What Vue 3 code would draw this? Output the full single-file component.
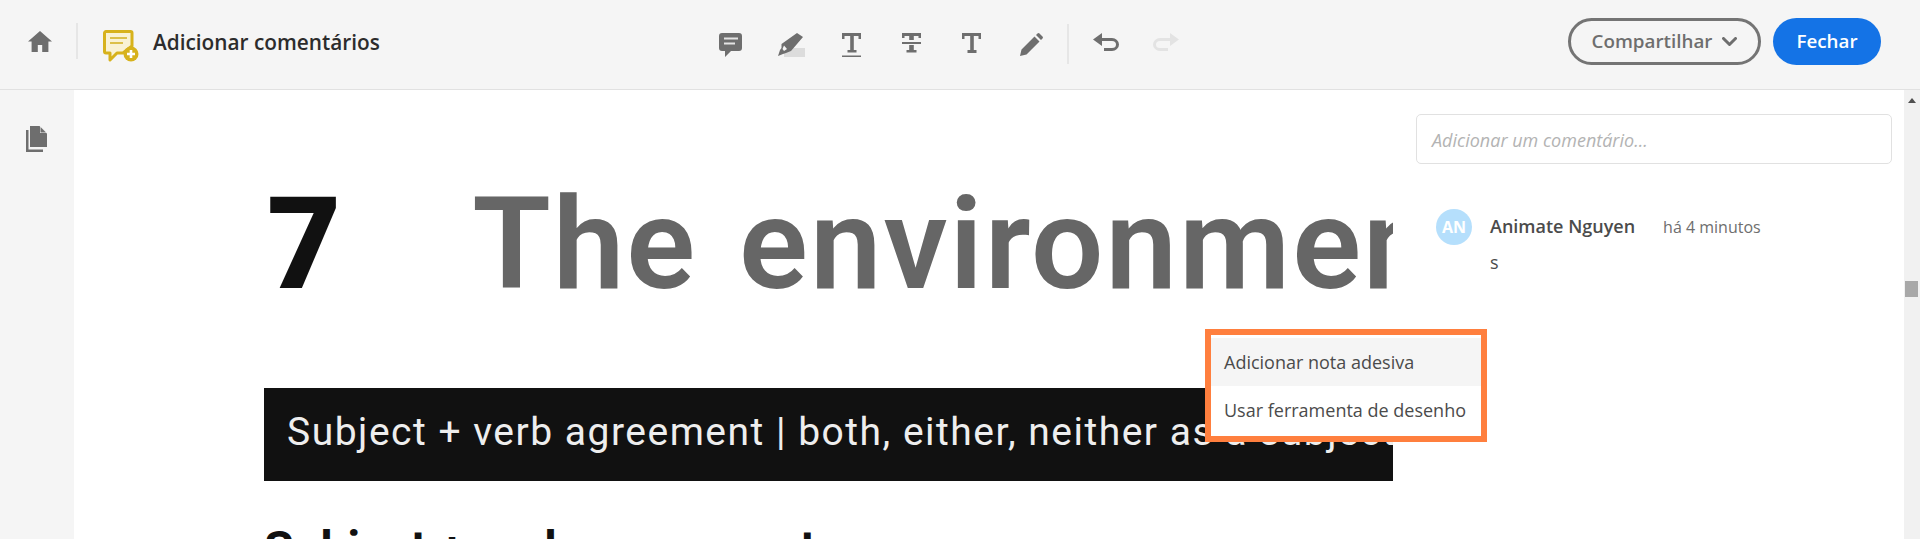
<template>
  <div class="viewer">
    <header class="topbar">
      <div class="topbar__left">
        <button class="icon-btn home-btn" aria-label="Início">
          <svg width="26" height="22" viewBox="0 0 26 22"><path d="M13 1 1 11.500h3.600V22h6.200v-7h4.400v7h6.200V11.500H25z" fill="#6e6e6e" /></svg>
        </button>
        <span class="vline"></span>
        <svg class="tool-logo" width="36" height="32" viewBox="0 0 36 32">
          <path d="M3 1.500h24.500a1.500 1.500 0 0 1 1.500 1.500v13L20 23h-6l-7 7v-7H3a1.500 1.500 0 0 1-1.500-1.500V3A1.500 1.500 0 0 1 3 1.500z" fill="#f9f2d4" stroke="#d7b21c" stroke-width="3" stroke-linejoin="round" />
          <path d="M7 8h17M7 13h13" stroke="#dcc04a" stroke-width="2" />
          <circle cx="28" cy="24" r="7.500" fill="#d7b21c" />
          <path d="M28 20v8M24 24h8" stroke="#fff" stroke-width="2.600" />
        </svg>
        <span class="tool-title">Adicionar comentários</span>
      </div>

      <div class="tools">
        <svg class="tool tool--note" width="23" height="24" viewBox="0 0 23 24">
          <path d="M3 0h17a3 3 0 0 1 3 3v12a3 3 0 0 1-3 3h-8l-6 6v-6H3a3 3 0 0 1-3-3V3a3 3 0 0 1 3-3z" fill="#6e6e6e" />
          <path d="M5 5.500h14M5 10.500h11" stroke="#e4e4e4" stroke-width="2" />
        </svg>
        <svg class="tool tool--mark" width="27" height="24" viewBox="0 0 27 24">
          <rect x="6" y="15" width="21" height="9" fill="#dcdcdc" />
          <path d="M19 0l6 4-12 14-5 2-3 1-5 2 2-6 1.500-2v-4z" fill="#6e6e6e" />
          <path d="M6 12.500l3 3.500-3 2-1.500-2z" fill="#f5f5f5" />
        </svg>
        <svg class="tool tool--under" width="19" height="24" viewBox="0 0 19 24">
          <path d="M0 0h19v6h-2.500V3h-4.700v14h2.700v2.500h-9V17h2.700V3H2.500v3H0z" fill="#6e6e6e" />
          <rect y="22.500" width="19" height="1.500" fill="#6e6e6e" />
        </svg>
        <svg class="tool tool--strike" width="19" height="20" viewBox="0 0 19 20">
          <path d="M0 0h19v5h-2.500V3h-4.700v4H7.200V3H2.500v2H0zM7.200 12h4.600v5h2.700v2.500h-10V17h2.700z" fill="#6e6e6e" />
          <rect y="9" width="19" height="2" fill="#6e6e6e" />
        </svg>
        <svg class="tool tool--text" width="19" height="20" viewBox="0 0 19 20">
          <path d="M0 0h19v6h-2.500V3h-4.700v14h2.700v3h-9v-3h2.700V3H2.500v3H0z" fill="#6e6e6e" />
        </svg>
        <svg class="tool tool--pencil" width="23" height="23" viewBox="0 0 23 23">
          <path d="M0 23l1.500-6.500L14.500 3.500l5 5L6.500 21.500zM16 2l1.500-1.500a1.500 1.500 0 0 1 2 0l3 3a1.500 1.500 0 0 1 0 2L21 7z" fill="#6e6e6e" />
        </svg>
        <span class="vline vline--tools"></span>
        <svg class="tool tool--undo" width="26" height="18" viewBox="0 0 26 18">
          <path d="M9 0v5h10a7 6.500 0 0 1 0 13h-8v-3h8a4 3.500 0 0 0 0-7H9v5L0 6.500z" fill="#6e6e6e" />
        </svg>
        <svg class="tool" width="26" height="18" viewBox="0 0 26 18">
          <path d="M17 0v5H7a7 6.500 0 0 0 0 13h8v-3H7a4 3.500 0 0 1 0-7h10v5l9-6.500z" fill="#e3e3e3" />
        </svg>
      </div>

      <div class="actions">
        <button class="btn btn--outline">
          Compartilhar
          <svg width="15" height="9" viewBox="0 0 15 9"><path d="M1.500 1.500l6 6 6-6" fill="none" stroke="#6e6e6e" stroke-width="3" stroke-linecap="round" stroke-linejoin="round" /></svg>
        </button>
        <button class="btn btn--primary">Fechar</button>
      </div>
    </header>

    <div class="body">
      <aside class="rail">
        <svg width="21" height="26" viewBox="0 0 21 26">
          <path d="M4 0h9.500L21 7.500V21H4z" fill="#6e6e6e" />
          <path d="M14 0v7h7z" fill="#f5f5f5" />
          <path d="M14.500 1v5.500H20z" fill="#6e6e6e" />
          <path d="M0 4h2.500v19.500H17V26H0z" fill="#6e6e6e" />
        </svg>
      </aside>

      <main class="page">
        <h1 class="chapter">
          <span class="chapter__num">7</span>
          <span class="chapter__name">The environment</span>
        </h1>
        <div class="banner">Subject + verb agreement | both, either, neither as a subject</div>
        <h2 class="section">Subject + verb agreement</h2>
      </main>

      <section class="comments">
        <div class="comment-input">Adicionar um comentário...</div>
        <article class="comment">
          <div class="avatar">AN</div>
          <div class="comment__main">
            <div class="comment__head">
              <span class="comment__author">Animate Nguyen</span>
              <span class="comment__time">há 4 minutos</span>
            </div>
            <p class="comment__text">s</p>
          </div>
        </article>
      </section>

      <div class="scrollbar">
        <span class="scrollbar__arrow"></span>
        <span class="scrollbar__thumb"></span>
      </div>

      <ul class="menu">
        <li class="menu__item menu__item--active">Adicionar nota adesiva</li>
        <li class="menu__item">Usar ferramenta de desenho</li>
      </ul>
    </div>
  </div>
</template>

<script setup>
</script>

<style>
html,
body {
  margin: 0;
  height: 100%;
  overflow: hidden;
}
</style>

<style scoped>
.viewer {
  display: flex;
  flex-direction: column;
  height: 100vh;
  font-family: "Open Sans", "Noto Sans", sans-serif;
  color: #4b4b4b;
  background: #fff;
}

.topbar {
  position: relative;
  display: flex;
  align-items: center;
  justify-content: space-between;
  flex: none;
  box-sizing: border-box;
  height: 90px;
  padding: 0 39px 7px 27px;
  background: #f5f5f5;
  border-bottom: 1px solid #e1e1e1;
}

.topbar__left {
  display: flex;
  align-items: center;
}

.icon-btn {
  display: flex;
  padding: 0;
  border: 0;
  background: none;
}

.home-btn {
  margin-right: 23px;
}

.vline {
  display: block;
  width: 2px;
  height: 36px;
  background: #e6e6e6;
}

.tool-logo {
  margin: 10px 14px 0 25px;
}

.tool-title {
  padding-top: 2px;
  font-size: 20.800px;
  font-weight: 600;
  color: #2c2c2c;
}

.tools {
  position: absolute;
  top: 33px;
  left: 719px;
  display: flex;
  align-items: flex-start;
}

.tool--note {
  margin-right: 36px;
}

.tool--mark {
  margin-right: 37px;
}

.tool--under {
  margin-right: 41px;
}

.tool--strike {
  margin-right: 41px;
}

.tool--text {
  margin-right: 39px;
}

.tool--pencil {
  margin-right: 24px;
}

.vline--tools {
  height: 40px;
  margin: -9px 24px 0 0;
}

.tool--undo {
  margin-right: 34px;
}

.actions {
  display: flex;
  gap: 12px;
}

.btn {
  display: flex;
  align-items: center;
  justify-content: center;
  box-sizing: border-box;
  height: 47px;
  border-radius: 24px;
  font-family: inherit;
  font-size: 18.800px;
  font-weight: 600;
}

.btn--outline {
  gap: 10px;
  width: 193px;
  border: 3px solid #747474;
  color: #6e6e6e;
  background: none;
}

.btn--primary {
  width: 108px;
  border: 0;
  color: #fff;
  background: #1473e6;
}

.body {
  position: relative;
  display: flex;
  flex: 1;
  min-height: 0;
  overflow: hidden;
}

.rail {
  flex: none;
  box-sizing: border-box;
  width: 74px;
  padding: 36px 0 0 26px;
  background: #f5f5f5;
}

.page {
  flex: none;
  box-sizing: border-box;
  width: 1319px;
  padding: 109px 0 0 190px;
  overflow: hidden;
}

.chapter {
  display: flex;
  align-items: baseline;
  gap: 131px;
  margin: 0 0 0 3px;
  font-family: Roboto, sans-serif;
  font-size: 128px;
  line-height: 91px;
  white-space: nowrap;
}

.chapter__num {
  font-weight: 900;
  color: #111;
}

.chapter__name {
  font-weight: 600;
  letter-spacing: 2px;
  word-spacing: 8px;
  color: #666;
}

.banner {
  box-sizing: border-box;
  height: 93px;
  margin-top: 98px;
  padding: 21px 0 0 23px;
  font-family: Roboto, sans-serif;
  font-size: 39px;
  letter-spacing: 1.500px;
  white-space: nowrap;
  color: #eee;
  background: #111;
}

.section {
  margin: 38px 0 0;
  font-family: Roboto, sans-serif;
  font-size: 48px;
  font-weight: 700;
  line-height: 60px;
  white-space: nowrap;
  color: #111;
}

.comments {
  flex: 1;
  box-sizing: border-box;
  padding: 24px 12px 0 23px;
}

.comment-input {
  box-sizing: border-box;
  height: 50px;
  padding: 0 15px;
  border: 1px solid #e1e1e1;
  border-radius: 5px;
  font-size: 18px;
  font-style: italic;
  line-height: 50px;
  color: #b3b3b3;
}

.comment {
  display: flex;
  gap: 18px;
  margin: 45px 0 0 20px;
}

.avatar {
  display: flex;
  align-items: center;
  justify-content: center;
  flex: none;
  width: 36px;
  height: 36px;
  border-radius: 50%;
  font-size: 16px;
  font-weight: 700;
  color: #fff;
  background: #b5dffc;
}

.comment__head {
  display: flex;
  align-items: baseline;
  gap: 28px;
  line-height: 34px;
}

.comment__author {
  font-size: 18px;
  font-weight: 600;
}

.comment__time {
  font-size: 16px;
  color: #6e6e6e;
}

.comment__text {
  margin: 6px 0 0;
  font-size: 18px;
  line-height: 24px;
}

.scrollbar {
  position: relative;
  flex: none;
  width: 16px;
  background: #f1f1f1;
}

.scrollbar__arrow {
  position: absolute;
  top: 8px;
  left: 4px;
  width: 0;
  height: 0;
  border: 4px solid transparent;
  border-top: 0;
  border-bottom: 5px solid #505050;
}

.scrollbar__thumb {
  position: absolute;
  top: 191px;
  left: 1px;
  width: 13px;
  height: 16px;
  background: #a8a8a8;
}

.menu {
  position: absolute;
  top: 239px;
  left: 1205px;
  box-sizing: border-box;
  width: 282px;
  height: 113px;
  margin: 0;
  padding: 3px 0;
  border: 6px solid #ff7f3e;
  list-style: none;
  background: #fff;
}

.menu__item {
  height: 48px;
  padding-left: 13px;
  font-size: 18px;
  line-height: 48px;
  white-space: nowrap;
}

.menu__item--active {
  background: #f5f5f5;
}
</style>
